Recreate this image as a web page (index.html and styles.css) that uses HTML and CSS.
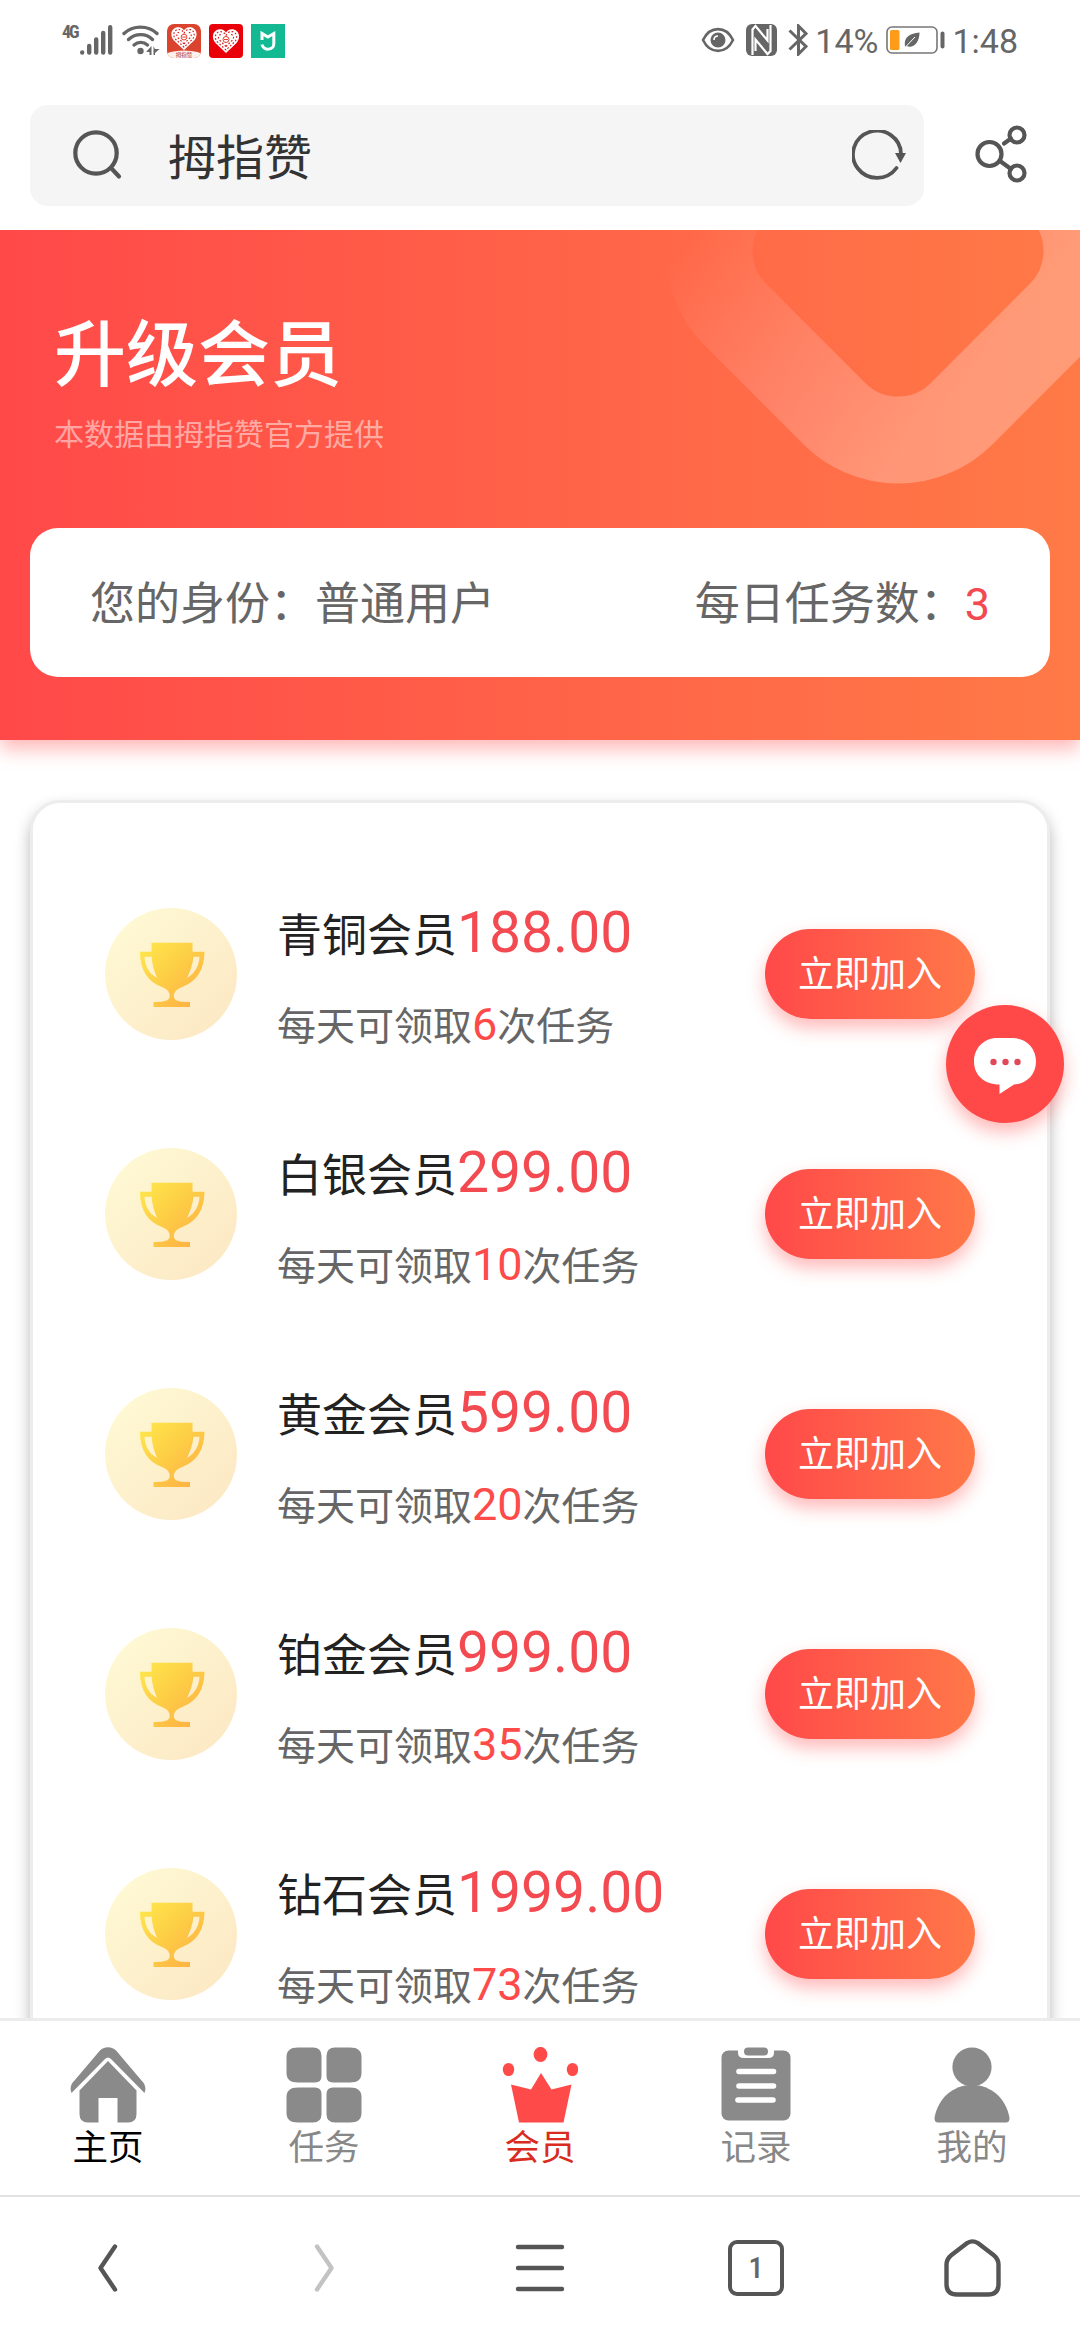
FILE: index.html
```html
<!DOCTYPE html>
<html lang="zh-CN">
<head>
<meta charset="utf-8">
<title>升级会员</title>
<link rel="stylesheet" href="styles.css">
</head>
<body>
<svg class="defs" aria-hidden="true">
  <defs>
    <linearGradient id="cup" x1="0" y1="0" x2="1" y2="1">
      <stop offset="0" stop-color="#ffe84c"/>
      <stop offset=".45" stop-color="#fdcf45"/>
      <stop offset="1" stop-color="#ffab45"/>
    </linearGradient>
    <symbol id="trophy" viewBox="0 0 132 132">
      <path fill="url(#cup)" fill-rule="evenodd" d="M46.500 34.700H87.500V43.700H99.500C99.500 62 91 74 77 79C70 82 68.500 85 69 89.500C70 93.500 77 94 85 94V99H48.500V94C56 94 63.500 93.500 64.500 89.500C65 85 64 82 57 79C43 74 35 62 35 43.700H46.500ZM39.500 48.700C40 58 43.500 65 52 70C49.500 64 47.200 57 46.500 48.700ZM94.500 48.700H88.500C87.500 57 85 64 82 70C90 65 94 58 94.500 48.700Z"/>
    </symbol>
    <symbol id="heart" viewBox="0 0 28 26">
      <path fill="#fff" d="M14 25L3.500 15C-1 10 0.500 2.500 7 1.300C10.500 0.800 12.800 2.500 14 4.500C15.200 2.500 17.500 0.800 21 1.300C27.500 2.500 29 10 24.500 15Z"/>
      <g fill="none" stroke="#d9201c" stroke-width="1.200" stroke-dasharray="1.700 1.900">
        <path d="M14 22L5.500 14C2 10.500 3 4.500 7.500 3.700C11 3.200 13 5.500 14 7.500C15 5.500 17 3.200 20.500 3.700C25 4.500 26 10.500 22.500 14Z"/>
        <path d="M14 18.500L8.500 13C5.500 10.500 6 7 9 6.500M14 18.500L19.500 13C22.500 10.500 22 7 19 6.500"/>
      </g>
      <circle cx="14" cy="11.500" r="3" fill="none" stroke="#e84030" stroke-width="1"/>
      <path d="M12 11.500H16" stroke="#e84030"/>
    </symbol>
  </defs>
</svg>

<header class="status">
  <div class="status-left">
    <span class="net">4G</span>
    <svg class="signal" width="33" height="32" viewBox="0 0 33 32" fill="none" stroke="#666" stroke-width="4.400" stroke-linecap="round"><path d="M2.200 28.500V28.600M9.200 22V28.600M16.200 15.500V28.600M23.200 9V28.600M30.200 3.200V28.600"/></svg>
    <svg class="wifi" width="38" height="32" viewBox="0 0 38 32"><g fill="none" stroke="#666" stroke-width="3.400" stroke-linecap="round"><path d="M2 9.500C11 1 26 1 35 9.500"/><path d="M6.500 15.500C13.500 9 24 9 30.500 15.500"/><path d="M12 21C16 17.500 21.500 17.500 25.500 21"/></g><circle cx="18.500" cy="27" r="3.200" fill="#666"/><path fill="#666" d="M24.500 27.500L29.500 22V31H27.500V28H24.500ZM31.500 22V31H33V29L37.500 25H33Z"/></svg>
    <svg class="app" width="34" height="34" viewBox="0 0 34 34"><clipPath id="appclip"><rect width="34" height="34" rx="7"/></clipPath><g clip-path="url(#appclip)"><rect width="34" height="34" fill="#da432e"/><ellipse cx="17" cy="32" rx="19" ry="5.500" fill="#fff0e9"/></g><use href="#heart" x="3" y="2" width="28" height="25"/><text x="17" y="32.500" class="app-name">拇指赞</text></svg>
    <svg class="app" width="34" height="34" viewBox="0 0 34 34"><rect width="34" height="34" rx="4" fill="#e90009"/><use href="#heart" x="2" y="4" width="30" height="26"/></svg>
    <svg class="app" width="34" height="34" viewBox="0 0 34 34"><rect width="34" height="34" fill="#12b993"/><path d="M11 16V9.500L16.800 13L22.800 9.500V20C22.800 26.500 12.500 27 11 20.500" fill="none" stroke="#fff" stroke-width="3"/></svg>
  </div>
  <div class="status-right">
    <svg class="eye" width="34" height="26" viewBox="0 0 34 26"><path d="M2 13C9 -1.500 25 -1.500 32 13C25 27.500 9 27.500 2 13Z" fill="none" stroke="#666" stroke-width="2.600"/><circle cx="17" cy="13" r="7.500" fill="#666"/><path d="M13 13C13 10.500 14.500 9 17 9" fill="none" stroke="#fff" stroke-width="1.600"/></svg>
    <svg class="nfc" width="31" height="32" viewBox="0 0 31 32"><rect width="31" height="32" rx="6" fill="#666"/><path d="M6.500 31V5.500L9.500 2L21.500 16.500V5M24.500 1V27L21.500 30L9.500 15.500V27" fill="none" stroke="#fff" stroke-width="2.200"/></svg>
    <svg class="bt" width="20" height="32" viewBox="0 0 20 32"><path d="M1.500 6.500L18 22.500L10.500 30V2L18 9.500L1.500 25.500" fill="none" stroke="#666" stroke-width="3"/></svg>
    <span class="pct">14%</span>
    <svg class="battery" width="60" height="28" viewBox="0 0 60 28"><rect x="1" y="1" width="50" height="26" rx="5" fill="#fff" stroke="#777" stroke-width="1.600"/><rect x="4" y="4" width="9.500" height="20" rx="1.500" fill="#ff9d1a"/><path d="M19 21C17.500 10 24 8 33.500 6.500C33.500 16 28 23 20.500 20Z" fill="#666"/><path d="M18.500 22L29 11" stroke="#fff" stroke-width="1"/><rect x="54.500" y="5.500" width="4" height="17" rx="2" fill="#666"/></svg>
    <span class="time">1:48</span>
  </div>
</header>

<div class="toolbar">
  <div class="search">
    <svg width="50" height="52" viewBox="0 0 50 52" fill="none" stroke="#555" stroke-width="4.200" stroke-linecap="round"><circle cx="23" cy="24" r="20.700"/><path d="M39 40L46 47.500"/></svg>
    <span class="query">拇指赞</span>
    <svg class="reload" width="56" height="52" viewBox="0 0 56 52"><path d="M49 24A24 23.500 0 1 0 44.500 38" fill="none" stroke="#555" stroke-width="3.800" stroke-linecap="round"/><path d="M43 23H54L48.500 33Z" fill="#555"/></svg>
  </div>
  <svg class="share" width="52" height="60" viewBox="0 0 52 60" fill="none" stroke="#555" stroke-width="4.200" stroke-linecap="round"><circle cx="14.500" cy="30" r="12"/><circle cx="42" cy="11" r="7.500"/><circle cx="42" cy="49" r="7.500"/><path d="M36 14.500L29 19.500M25 37L36 45"/></svg>
</div>

<main class="page">
  <section class="hero">
    <svg class="ring" width="440" height="280" viewBox="640 230 440 280">
      <defs><linearGradient id="fade" gradientUnits="userSpaceOnUse" x1="680" y1="245" x2="915" y2="440"><stop offset="0" stop-color="#ffb0a8" stop-opacity="0"/><stop offset=".5" stop-color="#ffb0a8" stop-opacity=".3"/><stop offset="1" stop-color="#ffbfab" stop-opacity=".48"/></linearGradient></defs>
      <path d="M735.300 314.600A90 90 0 0 1 735.300 187.400L834.400 88.300A90 90 0 0 1 961.600 88.300L1060.700 187.400A90 90 0 0 1 1060.700 314.600L961.600 413.700A90 90 0 0 1 834.400 413.700Z" fill="none" stroke="url(#fade)" stroke-width="87"/>
    </svg>
    <h1 class="title">升级会员</h1>
    <p class="subtitle">本数据由拇指赞官方提供</p>
    <div class="identity">
      <span>您的身份：普通用户</span>
      <span>每日任务数：<b class="count">3</b></span>
    </div>
  </section>

  <section class="plans">
    <article class="plan">
      <span class="medal"><svg width="132" height="132"><use href="#trophy"/></svg></span>
      <div class="info"><p class="name">青铜会员<b class="price">188.00</b></p><p class="quota">每天可领取<b class="num">6</b>次任务</p></div>
      <button class="join">立即加入</button>
    </article>
    <article class="plan">
      <span class="medal"><svg width="132" height="132"><use href="#trophy"/></svg></span>
      <div class="info"><p class="name">白银会员<b class="price">299.00</b></p><p class="quota">每天可领取<b class="num">10</b>次任务</p></div>
      <button class="join">立即加入</button>
    </article>
    <article class="plan">
      <span class="medal"><svg width="132" height="132"><use href="#trophy"/></svg></span>
      <div class="info"><p class="name">黄金会员<b class="price">599.00</b></p><p class="quota">每天可领取<b class="num">20</b>次任务</p></div>
      <button class="join">立即加入</button>
    </article>
    <article class="plan">
      <span class="medal"><svg width="132" height="132"><use href="#trophy"/></svg></span>
      <div class="info"><p class="name">铂金会员<b class="price">999.00</b></p><p class="quota">每天可领取<b class="num">35</b>次任务</p></div>
      <button class="join">立即加入</button>
    </article>
    <article class="plan">
      <span class="medal"><svg width="132" height="132"><use href="#trophy"/></svg></span>
      <div class="info"><p class="name">钻石会员<b class="price">1999.00</b></p><p class="quota">每天可领取<b class="num">73</b>次任务</p></div>
      <button class="join">立即加入</button>
    </article>
  </section>
</main>

<nav class="tabs">
  <a class="tab tab-home"><svg width="76" height="76" viewBox="0 0 76 76" fill="#8a8a8a"><path d="M1.500 46C-0.500 41 1 37 4.500 33.500L29.500 4C34 -1 42 -1 46.500 4L71.500 33.500C75 37 76.500 41 74.500 46L41 12C39 10 37 10 35 12Z"/><path fill-rule="evenodd" d="M38 14L66.500 43.500V67Q66.500 75.500 58 75.500H47.500V51H28.500V75.500H18Q9.500 75.500 9.500 67V43.500Z"/></svg><span>主页</span></a>
  <a class="tab"><svg width="76" height="76" viewBox="0 0 76 76" fill="#8a8a8a"><path d="M12 .5H27Q35.500 .5 35.500 9V29Q35.500 35.500 29 35.500H12Q.5 35.500 .5 26V10Q.5 .5 12 .5ZM49 .5H64Q75.500 .5 75.500 10V26Q75.500 35.500 64 35.500H47Q40.500 35.500 40.500 29V9Q40.500 .5 49 .5ZM12 40.500H29Q35.500 40.500 35.500 47V67Q35.500 75.500 27 75.500H12Q.5 75.500 .5 66V50Q.5 40.500 12 40.500ZM47 40.500H64Q75.500 40.500 75.500 50V66Q75.500 75.500 64 75.500H49Q40.500 75.500 40.500 67V47Q40.500 40.500 47 40.500Z"/></svg><span>任务</span></a>
  <a class="tab tab-active"><svg width="76" height="76" viewBox="0 0 76 76" fill="#ff4a4a"><ellipse cx="38.500" cy="7.500" rx="6.900" ry="7.600"/><ellipse cx="6.500" cy="22.500" rx="5.700" ry="6.600"/><ellipse cx="70.500" cy="22.500" rx="5.700" ry="6.600"/><path d="M39 26L49.500 42.500L69.500 37.500L61.500 75.500H17L9 37.500L29 42.500Z"/></svg><span>会员</span></a>
  <a class="tab"><svg width="76" height="76" viewBox="0 0 76 76"><rect x="3.500" y="3.500" width="69" height="70" rx="7" fill="#8a8a8a"/><path d="M20 3V6Q20 11 26 11H50Q56 11 56 6V3Z" fill="#fff"/><rect x="26" y=".5" width="24" height="8" rx="4" fill="#8a8a8a"/><path d="M21 24.500H55.500M21 39H55.500M20 53H55" stroke="#fff" stroke-width="5.600" stroke-linecap="round"/></svg><span>记录</span></a>
  <a class="tab"><svg width="76" height="76" viewBox="0 0 76 76" fill="#8a8a8a"><circle cx="38" cy="20" r="19.600"/><path d="M38 38C57 38 72 51 75.500 71Q75.500 75.500 72 75.500H4Q.5 75.500 .5 71C4 51 19 38 38 38Z"/></svg><span>我的</span></a>
</nav>

<footer class="browser">
  <span class="cell"><svg width="30" height="52" viewBox="0 0 30 52"><path d="M22 4.500L7.500 26L22 47.500" fill="none" stroke="#555" stroke-width="4.400" stroke-linecap="round" stroke-linejoin="round"/></svg></span>
  <span class="cell"><svg width="30" height="52" viewBox="0 0 30 52"><path d="M8 4.500L22.500 26L8 47.500" fill="none" stroke="#c3c3c3" stroke-width="4.400" stroke-linecap="round" stroke-linejoin="round"/></svg></span>
  <span class="cell"><svg width="52" height="52" viewBox="0 0 52 52"><path d="M4 5H48M4 26H48M4 47H48" stroke="#555" stroke-width="4.400" stroke-linecap="round"/></svg></span>
  <span class="cell"><span class="count-box">1</span></span>
  <span class="cell"><svg class="house" width="60" height="60" viewBox="0 0 60 60"><path d="M25.500 3.800Q30.500 1 35.500 3.800L51.500 16Q56.500 20 56.500 26V45Q56.500 55.500 46 55.500H15Q4.500 55.500 4.500 45V26Q4.500 20 9.500 16Z" fill="none" stroke="#555" stroke-width="4.400" stroke-linejoin="round"/></svg></span>
</footer>

<div class="chat"><svg width="64" height="58" viewBox="0 0 64 58"><path d="M24 1H40C53 1 63 11 63 24.500C63 38 53 47 41 47.500L26.500 57V47.500C11 47.500 1 38 1 24.500C1 11 11 1 24 1Z" fill="#fff"/><g fill="#e04a58"><circle cx="20.500" cy="25" r="3.200"/><circle cx="32.500" cy="25" r="3.200"/><circle cx="44.500" cy="25" r="3.200"/></g></svg></div>
</body>
</html>
```
FILE: styles.css
```css
* {
  box-sizing: border-box;
}

body {
  margin: 0;
  position: relative;
  width: 1080px;
  height: 2340px;
  overflow: hidden;
  display: flex;
  flex-direction: column;
  background: #fff;
  font-family: Roboto, "Noto Sans CJK SC", sans-serif;
}

svg {
  display: block;
  flex: none;
}

p, h1 {
  margin: 0;
}

b {
  font-weight: 400;
}

.defs {
  position: absolute;
  width: 0;
  height: 0;
}

/* Phone status bar */
.status {
  height: 80px;
  flex: none;
  display: flex;
  justify-content: space-between;
  padding: 0 62px 0 62px;
  color: #666;
}

.status-left,
.status-right {
  display: flex;
  align-items: center;
}

.net {
  width: 18px;
  align-self: flex-start;
  margin-top: 22px;
  font: 700 18px/19px "Roboto Condensed", Roboto, sans-serif;
  letter-spacing: -2px;
}

.wifi {
  margin: 0 7px 0 9px;
}

.app {
  margin: 2px 8px 0 0;
}

.app-name {
  font-size: 5.500px;
  text-anchor: middle;
  fill: #a33;
}

.status-right {
  gap: 11px;
}

.pct,
.time {
  font-size: 34px;
  line-height: 40px;
  margin-top: 2px;
}

.pct {
  margin-left: -4px;
}

.battery {
  margin-left: -3px;
}

.time {
  margin-left: -5px;
}

/* Browser address bar */
.toolbar {
  height: 150px;
  flex: none;
  display: flex;
  align-items: flex-start;
  padding: 25px 51px 0 30px;
}

.search {
  width: 894px;
  height: 101px;
  border-radius: 18px;
  background: #f5f5f5;
  display: flex;
  align-items: center;
  padding: 0 16px 0 43px;
}

.search svg:first-child {
  margin-top: -2px;
}

.query {
  flex: 1;
  margin-left: 45px;
  font-size: 48px;
  line-height: 60px;
  color: #333;
  margin-top: 6px;
}

.share {
  margin: 19px 0 0 51px;
}

/* Page content */
.page {
  height: 1788px;
  flex: none;
  overflow: hidden;
}

.hero {
  position: relative;
  height: 510px;
  padding: 0 30px;
  background: linear-gradient(90deg, #ff4949, #ff7a47);
  box-shadow: 0 9px 18px rgba(255, 74, 74, .4);
}

.ring {
  position: absolute;
  top: 0;
  right: 0;
}

.title {
  padding: 76px 0 0 24px;
  font-size: 72px;
  line-height: 100px;
  font-weight: 500;
  color: #fff;
}

.subtitle {
  padding: 8px 0 0 24px;
  font-size: 30px;
  line-height: 42px;
  color: rgba(255, 255, 255, .5);
}

.identity {
  display: flex;
  align-items: center;
  justify-content: space-between;
  height: 149px;
  margin-top: 72px;
  padding: 0 60px 4px;
  border-radius: 28px;
  background: #fff;
  font-size: 45px;
  color: #666;
}

.count,
.price {
  color: #f24a50;
}

.plans {
  height: 1400px;
  margin: 60px 30px 0;
  padding: 51px 72px 0;
  border: 3px solid #ededed;
  border-radius: 30px;
  background: #fff;
  box-shadow: 0 8px 15px rgba(0, 0, 0, .28);
}

.plan {
  display: flex;
  align-items: center;
  height: 240px;
}

.medal {
  width: 132px;
  height: 132px;
  border-radius: 50%;
  background: linear-gradient(135deg, #fefbd6, #fce6c2);
}

.info {
  flex: 1;
  margin: 11px 0 0 40px;
}

.name {
  display: flex;
  align-items: baseline;
  font-size: 45px;
  line-height: 84px;
  color: #222;
}

.price {
  font-size: 57px;
}

.quota {
  margin-top: 4px;
  font-size: 39px;
  line-height: 84px;
  color: #666;
}

.num {
  font-size: 45px;
  color: #ff4a4a;
}

.join {
  width: 210px;
  height: 90px;
  border: 0;
  border-radius: 45px;
  padding: 1px 0 0;
  background: linear-gradient(90deg, #ff4949, #ff7849);
  box-shadow: 0 9px 18px rgba(255, 74, 74, .38);
  color: #fff;
  font: 400 36px/90px Roboto, "Noto Sans CJK SC", sans-serif;
}

/* App tab bar */
.tabs {
  height: 179px;
  flex: none;
  display: grid;
  grid-template-columns: repeat(5, 1fr);
  border-top: 3px solid #ececec;
  border-bottom: 2px solid #e2e2e2;
  background: #fff;
}

.tab {
  display: flex;
  flex-direction: column;
  align-items: center;
  padding-top: 26px;
  font-size: 35.500px;
  line-height: 51px;
  color: #888;
}

.tab-home {
  color: #000;
}

.tab-active {
  color: #d92b20;
}

/* Browser controls */
.browser {
  height: 143px;
  flex: none;
  display: grid;
  grid-template-columns: repeat(5, 1fr);
  padding-bottom: 2px;
}

.cell {
  display: flex;
  align-items: center;
  justify-content: center;
}

.count-box {
  width: 56px;
  height: 56px;
  border: 4px solid #555;
  border-radius: 9px;
  font: 500 30px/47px "Roboto Condensed", Roboto, sans-serif;
  text-align: center;
  color: #666;
}

.house {
  margin-top: 3px;
}

/* Floating support button */
.chat {
  position: absolute;
  left: 946px;
  top: 1005px;
  width: 118px;
  height: 118px;
  border-radius: 50%;
  background: #ff4949;
  box-shadow: 0 9px 18px rgba(255, 74, 74, .4);
  display: flex;
  align-items: center;
  justify-content: center;
  padding-top: 4px;
}
```
